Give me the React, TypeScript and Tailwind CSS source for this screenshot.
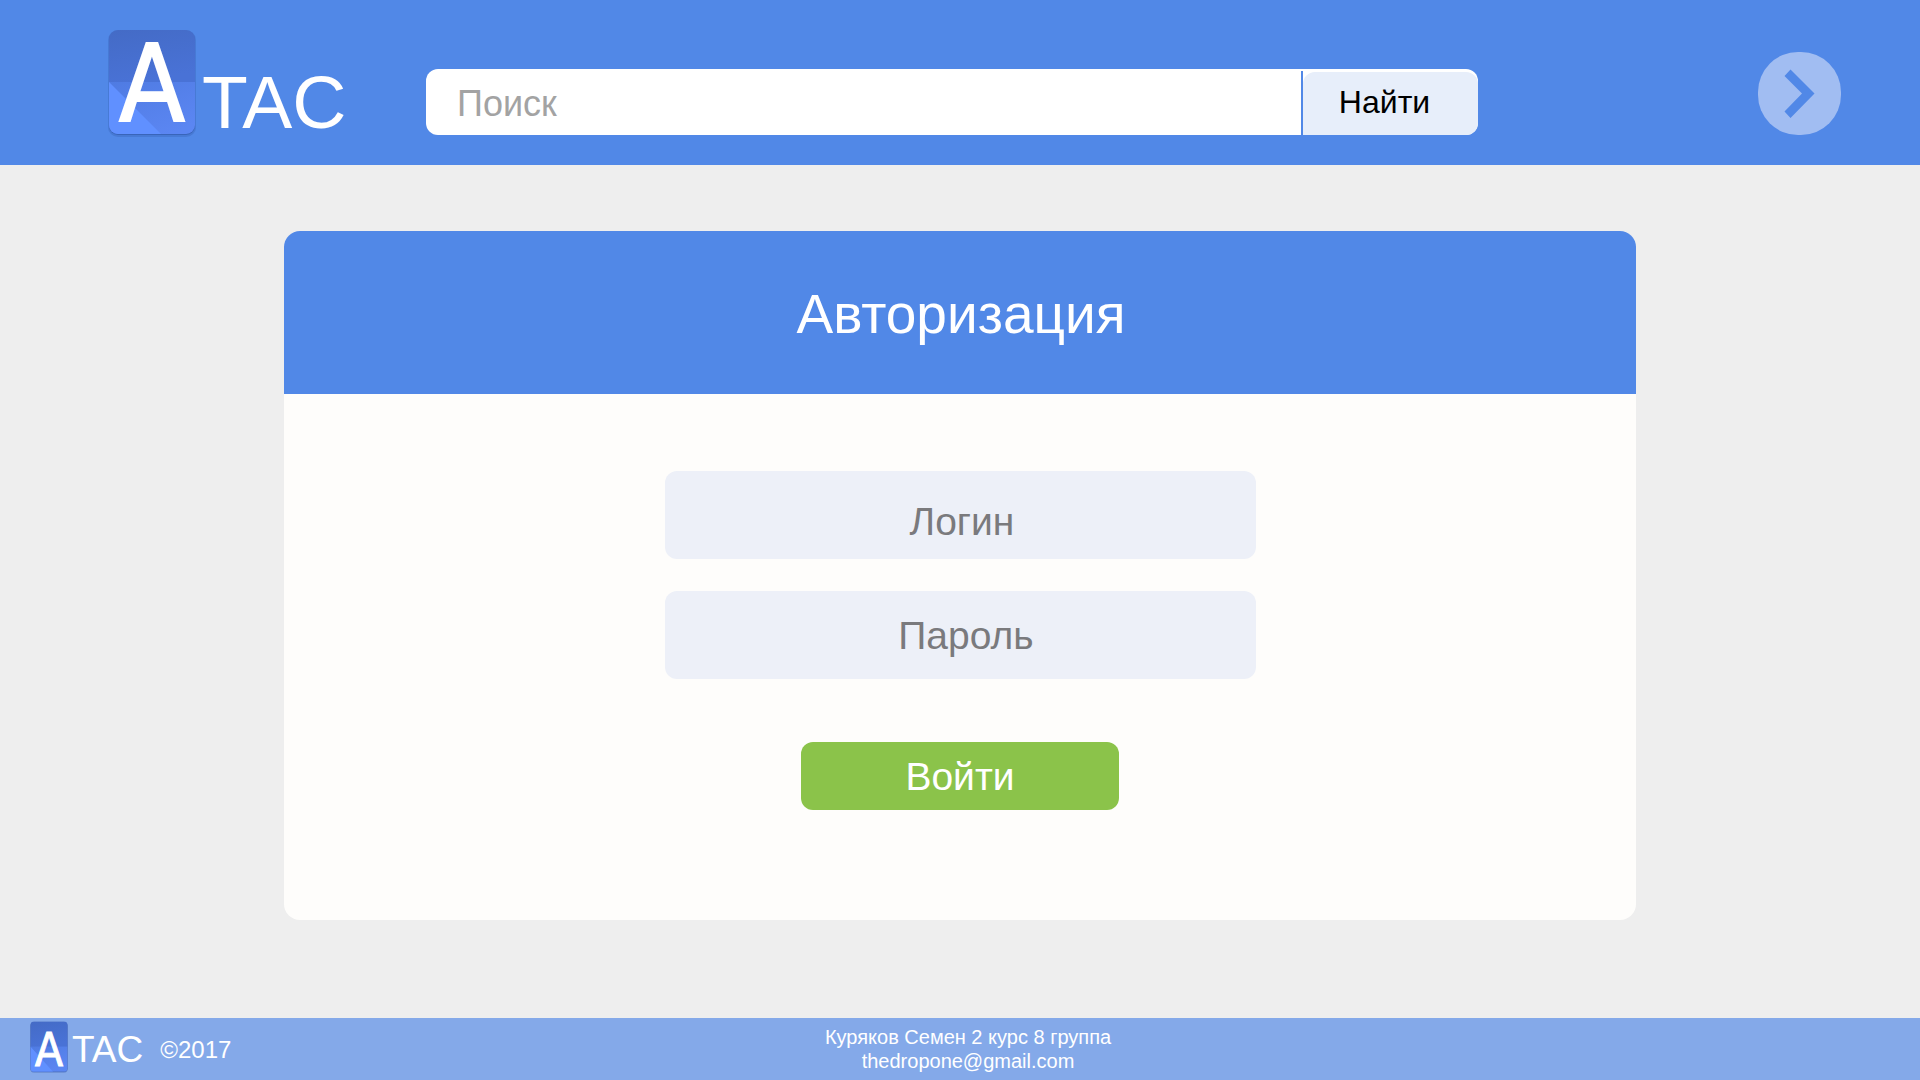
import React, { useId } from "react";

function Badge({ className, height = 108 }: { className: string; height?: number }) {
  const id = useId();
  const mid = height / 2 - 1;
  const base = height - 2;
  return (
    <svg viewBox={`0 0 88 ${height}`} className={`overflow-visible ${className}`} aria-hidden="true">
      <defs>
        <linearGradient id={`${id}-top`} x1="0" y1="0" x2="0.3" y2="1">
          <stop offset="0" stopColor="#446bc6" />
          <stop offset="1" stopColor="#4972d6" />
        </linearGradient>
        <linearGradient id={`${id}-bottom`} x1="0" y1="0" x2="0.6" y2="1">
          <stop offset="0" stopColor="#4f7be2" />
          <stop offset="1" stopColor="#5b86f2" />
        </linearGradient>
        <clipPath id={`${id}-clip`}>
          <rect x="1" y="1" width="86" height={height - 4} rx="9" />
        </clipPath>
      </defs>
      <rect x="0" y="1" width="88" height={height - 1} rx="10" fill="#2b50a0" opacity="0.25" />
      <rect x="1" y="2" width="86" height={height - 4} rx="9" fill="#2b50a0" opacity="0.5" />
      <g clipPath={`url(#${id}-clip)`}>
        <rect x="1" y="1" width="86" height={mid} fill={`url(#${id}-top)`} />
        <rect x="1" y={mid} width="86" height={height - mid} fill={`url(#${id}-bottom)`} />
        <path d={`M1 ${mid}L54 ${base}H1Z`} fill="#6090ff" />
      </g>
      <text
        x="44"
        y={height - 16}
        textAnchor="middle"
        fontSize="107"
        fill="#fff"
        stroke="#fff"
        strokeWidth="2"
        className="font-['Liberation_Sans_Narrow','DejaVu_Sans_Condensed',sans-serif]"
      >
        A
      </text>
    </svg>
  );
}

export default function App() {
  return (
    <div className="flex min-h-screen flex-col bg-[#eeeeee] font-['Liberation_Sans',Arial,sans-serif]">
      <header className="flex h-[165px] items-end bg-[#5188e7] pr-[79px] pb-[30px] pl-[108px]">
        <a href="#" aria-label="АТАС" className="flex w-[318px] shrink-0 items-end text-white">
          <Badge className="-mb-0.5 h-[108px] w-[88px]" />
          <span className="pl-1.5 text-[75px] leading-[65px]">TAC</span>
        </a>
        <form
          role="search"
          onSubmit={(e) => e.preventDefault()}
          className="mr-[280px] flex h-[66px] min-w-0 flex-1 overflow-hidden rounded-xl bg-white"
        >
          <input
            type="search"
            aria-label="Поиск"
            placeholder="Поиск"
            className="min-w-0 flex-1 pt-1 pl-[31px] text-4xl outline-none placeholder:text-[#a3a3a3]"
          />
          <div className="mt-0.5 w-0.5 bg-[#5188e7]" />
          <button
            type="submit"
            className="mt-[3px] w-[175px] rounded-t-xl bg-[#e7eefa] pr-11 pb-1 pl-8 text-[32px] text-black"
          >
            Найти
          </button>
        </form>
        <button
          type="button"
          aria-label="Вперёд"
          className="flex size-[83px] shrink-0 items-center justify-center rounded-[40px] bg-[#a1bdf2]"
        >
          <svg viewBox="0 0 83 83" className="size-full" aria-hidden="true">
            <path d="M26.500 24L32.500 17.500L56.500 41.500L32.500 66L26.500 59.500L44 41.500Z" fill="#5188e7" />
          </svg>
        </button>
      </header>

      <main className="flex-1 pt-[66px] pb-[98px]">
        <section className="mx-auto w-full max-w-[1352px] overflow-hidden rounded-2xl bg-[#fefdfb]">
          <h1 className="flex h-[163px] items-center justify-center bg-[#5188e7] pt-1 pl-0.5 text-[55px] text-white">
            Авторизация
          </h1>
          <form
            onSubmit={(e) => e.preventDefault()}
            className="flex flex-col items-center pt-[77px] pb-[110px]"
          >
            <input
              type="text"
              aria-label="Логин"
              placeholder="Логин"
              className="mb-8 h-[88px] w-full max-w-[591px] rounded-xl bg-[#edf0f8] pt-3.5 pl-1 text-center text-[39px] outline-none placeholder:text-[#7a7a7d]"
            />
            <input
              type="password"
              aria-label="Пароль"
              placeholder="Пароль"
              className="mb-[63px] h-[88px] w-full max-w-[591px] rounded-xl bg-[#edf0f8] pt-0.5 pl-3 text-center text-[39px] outline-none placeholder:text-[#7a7a7d]"
            />
            <button
              type="submit"
              className="h-[68px] w-[318px] rounded-xl bg-[#8bc34a] pt-0.5 text-[39px] text-white"
            >
              Войти
            </button>
          </form>
        </section>
      </main>

      <footer className="grid h-[62px] grid-cols-[1fr_auto_1fr] items-center bg-[#84a9e9] text-white">
        <div className="flex items-center pl-[30px]">
          <Badge height={120} className="mb-1 h-[52px] w-[38px]" />
          <span className="pt-0.5 pl-1 text-[37px] leading-[50px]">TAC</span>
          <span className="pt-0.5 pl-[17px] text-2xl">©2017</span>
        </div>
        <p className="pl-4 text-center text-xl leading-6">
          Куряков Семен 2 курс 8 группа
          <br />
          thedropone@gmail.com
        </p>
      </footer>
    </div>
  );
}
